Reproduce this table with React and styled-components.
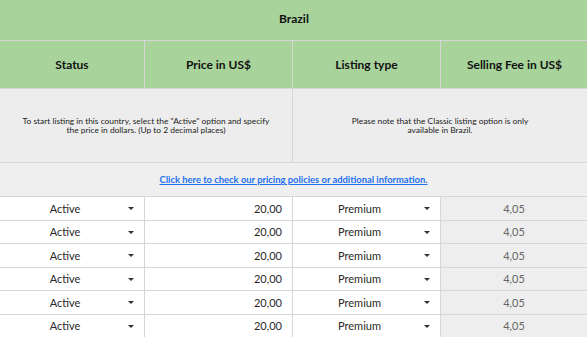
import React from "react";
import styled, { createGlobalStyle } from "styled-components";

const GlobalStyle = createGlobalStyle`
  html, body {
    margin: 0;
    padding: 0;
    background: #ffffff;
    font-family: Lato, "Open Sans", Arial, sans-serif;
  }
`;

const rows = Array.from({ length: 6 }, () => ({
  status: "Active",
  price: "20,00",
  type: "Premium",
  fee: "4,05",
}));

const Grid = styled.div`
  width: 587px;
  display: grid;
  grid-template-columns: 144px 147px 147px 146px;
  grid-template-rows: 40px 47px 73px 33px repeat(6, 22.5px);
  gap: 1px;
  background: #d6d6d6;
  border-right: 1px solid #d6d6d6;
  box-sizing: border-box;
`;

const Title = styled.div`
  grid-column: 1 / -1;
  background: #a8d39b;
  display: flex;
  align-items: center;
  justify-content: center;
  padding-bottom: 4px;
  font-weight: 700;
  font-size: 12px;
  color: #111;
  margin-right: -1px;
`;

const Head = styled.div`
  background: #a8d39b;
  display: flex;
  align-items: center;
  justify-content: center;
  font-weight: 700;
  font-size: 12px;
  color: #111;
  margin-right: ${(p) => (p.last ? "-1px" : "0")};
`;

const Info = styled.div`
  grid-column: span 2;
  background: #ededed;
  display: flex;
  align-items: center;
  justify-content: center;
  text-align: center;
  font-size: 8.4px;
  line-height: 9px;
  color: #222;
  padding: 0 ${(p) => p.pad}px;
`;

const LinkRow = styled.div`
  grid-column: 1 / -1;
  background: #efefef;
  display: flex;
  align-items: center;
  justify-content: center;
`;

const Link = styled.a`
  color: #1d6ff0;
  font-weight: 700;
  font-size: 9.4px;
  text-decoration: underline;
  cursor: pointer;
`;

const Select = styled.div`
  background: #ffffff;
  position: relative;
  display: flex;
  align-items: center;
  justify-content: center;
  padding-right: 14px;
  font-size: 11px;
  color: #2a2a2a;
`;

const Arrow = styled.span`
  position: absolute;
  right: 10px;
  top: 50%;
  margin-top: -1px;
  width: 0;
  height: 0;
  border-left: 3px solid transparent;
  border-right: 3px solid transparent;
  border-top: 3px solid #333;
`;

const Price = styled.div`
  background: #ffffff;
  display: flex;
  align-items: center;
  justify-content: flex-end;
  padding-right: 10px;
  font-size: 11px;
  color: #2a2a2a;
`;

const Fee = styled.div`
  background: #eeeeee;
  display: flex;
  align-items: center;
  justify-content: center;
  font-size: 11px;
  color: #666;
`;

export default function App() {
  return (
    <>
      <GlobalStyle />
      <Grid>
        <Title>Brazil</Title>
        <Head>Status</Head>
        <Head>Price in US$</Head>
        <Head>Listing type</Head>
        <Head last>Selling Fee in US$</Head>
        <Info pad={18}>
          To start listing in this country, select the "Active" option and specify
          the price in dollars. (Up to 2 decimal places)
        </Info>
        <Info pad={50}>
          Please note that the Classic listing option is only available in Brazil.
        </Info>
        <LinkRow>
          <Link>Click here to check our pricing policies or additional information.</Link>
        </LinkRow>
        {rows.map((r, i) => (
          <React.Fragment key={i}>
            <Select>
              {r.status}
              <Arrow />
            </Select>
            <Price>{r.price}</Price>
            <Select>
              {r.type}
              <Arrow />
            </Select>
            <Fee>{r.fee}</Fee>
          </React.Fragment>
        ))}
      </Grid>
    </>
  );
}
